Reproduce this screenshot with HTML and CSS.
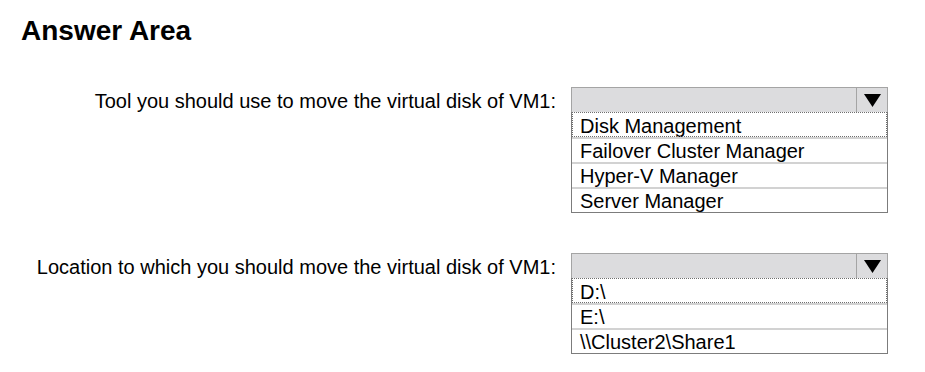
FILE: index.html
```html
<!DOCTYPE html>
<html>
    <head>
        <meta charset="utf-8">
        <title>Answer Area</title>
        <link rel="stylesheet" href="styles.css">
    </head>
    <body>
        <div class="answer-area">
            <h1 class="title">Answer Area</h1>

            <div class="question">
                <div class="question-label">Tool you should use to move the virtual disk of VM1:</div>
                <div class="dropdown">
                    <div class="dropdown-head">
                        <span class="dropdown-value"></span>
                        <span class="dropdown-arrow">
                            <svg width="17" height="13" viewBox="0 0 17 13"><polygon points="0,0 17,0 8.5,13" fill="#000"/></svg>
                        </span>
                    </div>
                    <ul class="dropdown-list">
                        <li class="dropdown-option is-focused">Disk Management</li>
                        <li class="dropdown-option">Failover Cluster Manager</li>
                        <li class="dropdown-option">Hyper-V Manager</li>
                        <li class="dropdown-option">Server Manager</li>
                    </ul>
                </div>
            </div>

            <div class="question">
                <div class="question-label">Location to which you should move the virtual disk of VM1:</div>
                <div class="dropdown">
                    <div class="dropdown-head">
                        <span class="dropdown-value"></span>
                        <span class="dropdown-arrow">
                            <svg width="17" height="13" viewBox="0 0 17 13"><polygon points="0,0 17,0 8.5,13" fill="#000"/></svg>
                        </span>
                    </div>
                    <ul class="dropdown-list">
                        <li class="dropdown-option is-focused">D:\</li>
                        <li class="dropdown-option">E:\</li>
                        <li class="dropdown-option">\\Cluster2\Share1</li>
                    </ul>
                </div>
            </div>
        </div>
    </body>
</html>
```

FILE: styles.css
```css
html {
    font-size: 20px;
    font-family: "Liberation Sans", Arial, sans-serif;
}

body {
    color: #000;
    background: #fff;
    margin: 0;
}

* {
    box-sizing: border-box;
}

.answer-area {
    padding: 15px 0 0 0;
}

.title {
    font-size: 28px;
    font-weight: bold;
    line-height: 31px;
    margin: 0 0 41px 21px;
}

.question {
    display: grid;
    grid-template-columns: 556px 317px;
    column-gap: 15px;
    align-items: start;
    margin-bottom: 40px;
}

.question:last-child {
    margin-bottom: 0;
}

.question-label {
    text-align: right;
    line-height: 25px;
    padding-top: 2px;
    white-space: nowrap;
}

.dropdown-head {
    display: flex;
    height: 25px;
    background: #dcdcde;
    border: 1px solid #a4a4a4;
    border-bottom: none;
}

.dropdown-value {
    flex: 1;
}

.dropdown-arrow {
    width: 31px;
    border-left: 1px solid #a4a4a4;
    display: flex;
    align-items: center;
    justify-content: center;
    padding-top: 1px;
}

.dropdown-arrow svg {
    display: block;
}

.dropdown-list {
    list-style: none;
    margin: 0;
    padding: 0;
    border: 1px solid #7c7c7c;
    border-top: none;
}

.dropdown-option {
    height: 25px;
    line-height: 21px;
    padding: 4px 0 0 8px;
    white-space: nowrap;
}

.dropdown-option + .dropdown-option {
    border-top: 2px solid #d2d2d2;
    padding-top: 2px;
}

.dropdown-option.is-focused {
    outline: 1px dotted #6e6e6e;
    outline-offset: -1px;
}
```
